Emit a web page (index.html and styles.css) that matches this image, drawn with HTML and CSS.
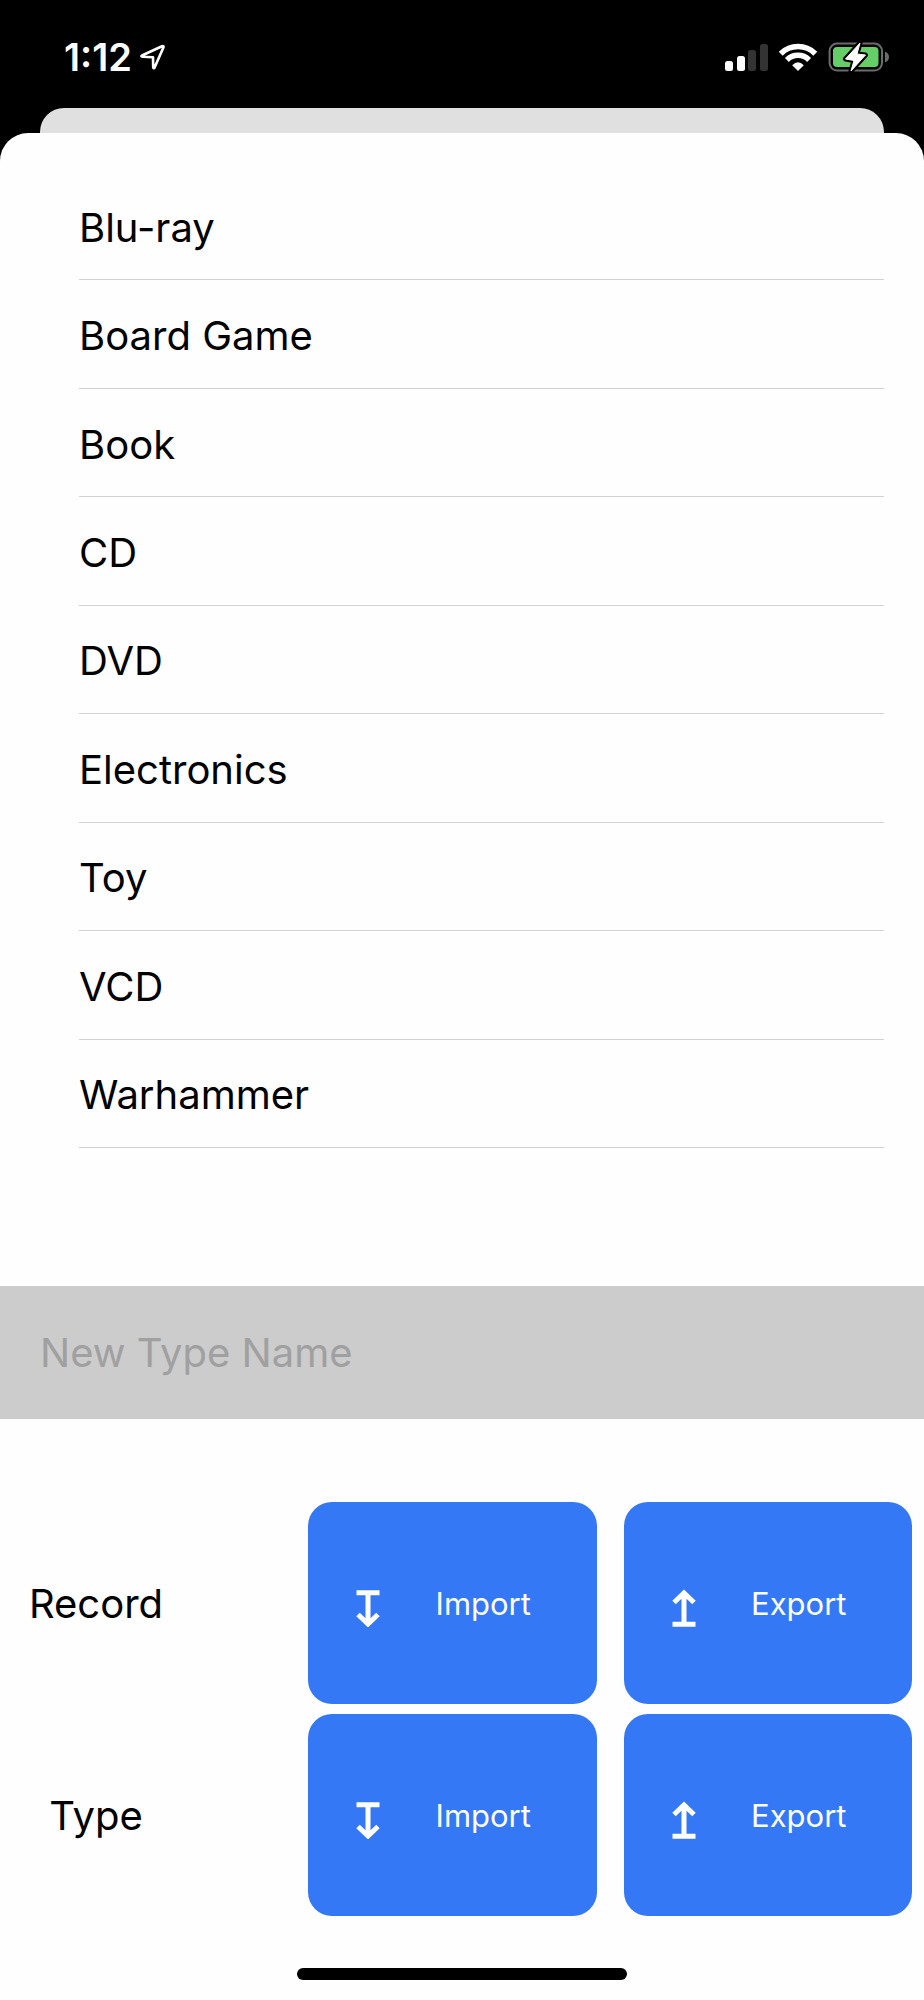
FILE: index.html
```html
<!DOCTYPE html>
<html lang="en">
  <head>
    <meta charset="UTF-8" />
    <meta name="viewport" content="width=device-width, initial-scale=1.0" />
    <title>Types</title>
    <link rel="stylesheet" href="styles.css">
  </head>
  <body>
    <header class="status-bar">
      <div class="status-left">
        <span class="time">1:12</span>
        <svg class="location" width="26" height="28" viewBox="0 0 26 28">
          <path d="M2 12.5 L22 3.2 Q24 2.5 23.4 4.5 L14.6 24.6 Q13.4 26 13.2 24.2 L13 14.2 L2.6 13.8 Q0.6 13.4 2 12.5 Z" />
        </svg>
      </div>
      <div class="status-right">
        <svg width="43" height="28" viewBox="0 0 43 28">
          <rect x="0" y="18" width="8" height="10" rx="2.5" fill="#fff" />
          <rect x="12" y="13" width="8" height="15" rx="2.5" fill="#fff" />
          <rect x="23" y="7" width="8" height="21" rx="2.5" fill="#333" />
          <rect x="35" y="1" width="8" height="27" rx="2.5" fill="#333" />
        </svg>
        <svg width="38" height="28" viewBox="0 0 38 28">
          <g fill="none" stroke="#fff" stroke-width="5.6">
            <path d="M1.7 10.7 A24.5 24.5 0 0 1 36.3 10.7" />
            <path d="M7.9 16.9 A15.7 15.7 0 0 1 30.1 16.9" />
          </g>
          <path d="M19 28 L13.2 22.2 Q19 16.2 24.8 22.2 Z" fill="#fff" />
        </svg>
        <svg width="62" height="30" viewBox="0 0 62 30">
          <rect x="1.6" y="1.6" width="52.4" height="27" rx="7.5" fill="none" stroke="#6b6b6b" stroke-width="2" />
          <path d="M57 9.5 Q61 11 61 15 Q61 19 57 20.5 Z" fill="#6b6b6b" />
          <rect x="5" y="5" width="45.5" height="20" rx="4" fill="#65ce67" />
          <path d="M32 1 L17.5 17 L26 18.5 L23 29 L37.5 13 L29 12 Z" fill="#fff" stroke="#000" stroke-width="5" stroke-linejoin="round" />
          <path d="M32 1 L17.5 17 L26 18.5 L23 29 L37.5 13 L29 12 Z" fill="#fff" stroke="#fff" stroke-linejoin="round" />
        </svg>
      </div>
    </header>

    <div class="sheet-behind"></div>

    <main class="sheet">
      <ul class="type-list">
        <li>Blu-ray</li>
        <li>Board Game</li>
        <li>Book</li>
        <li>CD</li>
        <li>DVD</li>
        <li>Electronics</li>
        <li>Toy</li>
        <li>VCD</li>
        <li>Warhammer</li>
      </ul>

      <input class="new-type" type="text" placeholder="New Type Name" aria-label="New Type Name" />

      <section class="actions">
        <div class="action-row">
          <h2 class="action-label" id="record">Record</h2>
          <div class="action-buttons">
            <button type="button" aria-describedby="record">
              <svg class="arrow" width="24" height="48" viewBox="0 0 24 48">
                <path d="M0.5 13.7 H23.5 M12 13.7 V44 M2 35.5 L12 45 L22 35.5" />
              </svg>
              <span>Import</span>
            </button>
            <button type="button" aria-describedby="record">
              <svg class="arrow" width="24" height="48" viewBox="0 0 24 48">
                <path d="M0.5 45.3 H23.5 M12 45.3 V15 M2 23.5 L12 14 L22 23.5" />
              </svg>
              <span>Export</span>
            </button>
          </div>
        </div>
        <div class="action-row">
          <h2 class="action-label" id="type">Type</h2>
          <div class="action-buttons">
            <button type="button" aria-describedby="type">
              <svg class="arrow" width="24" height="48" viewBox="0 0 24 48">
                <path d="M0.5 13.7 H23.5 M12 13.7 V44 M2 35.5 L12 45 L22 35.5" />
              </svg>
              <span>Import</span>
            </button>
            <button type="button" aria-describedby="type">
              <svg class="arrow" width="24" height="48" viewBox="0 0 24 48">
                <path d="M0.5 45.3 H23.5 M12 45.3 V15 M2 23.5 L12 14 L22 23.5" />
              </svg>
              <span>Export</span>
            </button>
          </div>
        </div>
      </section>

      <div class="home-indicator"></div>
    </main>
  </body>
</html>
```
FILE: styles.css
```css
* {
  box-sizing: border-box;
}
body {
  margin: 0;
  min-height: 100vh;
  display: flex;
  flex-direction: column;
  background-color: #000;
  color: #000;
  font-family: Inter, "Liberation Sans", sans-serif;
  font-size: 40px;
}
.status-bar {
  display: flex;
  justify-content: space-between;
  align-items: center;
  height: 108px;
  padding: 6px 34px 0 64px;
  color: #fff;
}
.status-left,
.status-right {
  display: flex;
  align-items: center;
}
.status-left {
  gap: 8px;
}
.status-right {
  gap: 11px;
}
.time {
  font-size: 38px;
  font-weight: 600;
}
.location path {
  fill: none;
  stroke: #fff;
  stroke-width: 2.6;
  stroke-linejoin: round;
}
.sheet-behind {
  height: 25px;
  margin: 0 40px;
  border-radius: 24px 24px 0 0;
  background-color: #e0e0e0;
}
.sheet {
  flex: 1;
  display: flex;
  flex-direction: column;
  padding-top: 39px;
  border-radius: 28px 28px 0 0;
  background-color: #fefefe;
}
.type-list {
  display: grid;
  grid-auto-rows: 1fr;
  min-height: 976px;
  margin: 0 40px 138px 79px;
  padding: 0;
  list-style: none;
}
.type-list li {
  display: flex;
  align-items: center;
  padding-top: 3px;
  border-bottom: 1px solid #d2d2d2;
}
.new-type {
  width: 100%;
  height: 133px;
  padding: 0 40px;
  border: none;
  border-radius: 0;
  background-color: #ccc;
  color: #000;
  font: inherit;
}
.new-type::placeholder {
  color: #a0a0a1;
  opacity: 1;
}
.actions {
  display: flex;
  flex-direction: column;
  gap: 10px;
  padding: 83px 12px 0 0;
}
.action-row {
  display: flex;
  align-items: center;
  gap: 116px;
}
.action-label {
  width: 192px;
  margin: 0;
  font-size: 40px;
  font-weight: 400;
  text-align: center;
}
.action-buttons {
  flex: 1;
  display: grid;
  grid-template-columns: 1fr 1fr;
  gap: 27px;
}
button {
  display: flex;
  align-items: center;
  height: 202px;
  padding: 0 48px;
  border: none;
  border-radius: 24px;
  background-color: #3478f6;
  color: #fff;
  font-family: inherit;
  font-size: 31px;
  cursor: pointer;
}
button span {
  flex: 1;
  padding-left: 38px;
  text-align: center;
}
.arrow path {
  fill: none;
  stroke: #fff;
  stroke-width: 5;
}
.home-indicator {
  width: 330px;
  height: 12px;
  margin: auto auto 20px;
  border-radius: 6px;
  background-color: #000;
}
```
